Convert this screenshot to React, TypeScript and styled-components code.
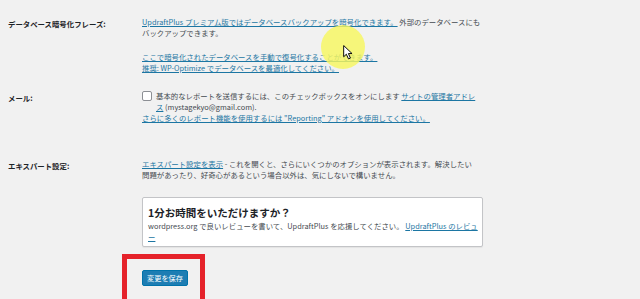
import styled, { createGlobalStyle } from "styled-components";

const GlobalStyle = createGlobalStyle`
  html, body {
    margin: 0;
    padding: 0;
    background: #f1f1f1;
    font-family: "Noto Sans CJK JP", "Noto Sans", sans-serif;
  }
`;

export default function App() {
  return (
    <>
      <GlobalStyle />
      <Page>
        <Row>
          <Label>データベース暗号化フレーズ:</Label>
          <Content>
            <Para>
              <Line>
                <Link>UpdraftPlus プレミアム版ではデータベースバックアップを暗号化できます。</Link> 外部のデータベースにも
              </Line>
              <Line>バックアップできます。</Line>
            </Para>
            <Para $gap={13}>
              <Line>
                <Link>ここで暗号化されたデータベースを手動で復号化することができます。</Link>
              </Line>
              <Line>
                <Link>推奨: WP-Optimize でデータベースを最適化してください。</Link>
              </Line>
            </Para>
          </Content>
        </Row>

        <Row $gap={17}>
          <Label>メール:</Label>
          <Content>
            <CheckRow>
              <Checkbox />
              <div>
                <Line>
                  基本的なレポートを送信するには、このチェックボックスをオンにします <Link>サイトの管理者アドレ</Link>
                </Line>
                <Line>
                  <Link>ス</Link> (mystagekyo@gmail.com).
                </Line>
              </div>
            </CheckRow>
            <Line>
              <Link>さらに多くのレポート機能を使用するには "Reporting" アドオンを使用してください。</Link>
            </Line>
          </Content>
        </Row>

        <Row $gap={35}>
          <Label>エキスパート設定:</Label>
          <Content>
            <Line>
              <Link>エキスパート設定を表示</Link> - これを開くと、さらにいくつかのオプションが表示されます。解決したい
            </Line>
            <Line>問題があったり、好奇心があるという場合以外は、気にしないで構いません。</Line>
          </Content>
        </Row>

        <Indent>
          <Notice>
            <NoticeTitle>1分お時間をいただけますか？</NoticeTitle>
            <Line>
              wordpress.org で良いレビューを書いて、UpdraftPlus を応援してください。 <Link>UpdraftPlus のレビュ</Link>
            </Line>
            <Line>
              <Link>ー</Link>
            </Line>
          </Notice>

          <SaveArea>
            <SaveButton>変更を保存</SaveButton>
            <RedFrame />
          </SaveArea>
        </Indent>

        <Highlight />
        <Cursor width="11" height="15" viewBox="0 0 10 14">
          <path d="M0.5 0.5 L0.5 11 L3 8.6 L5 13 L6.8 12.2 L4.9 8 L8.3 8 Z" fill="#fff" stroke="#000" strokeWidth="0.9" strokeLinejoin="round" />
        </Cursor>
      </Page>
    </>
  );
}

const Page = styled.div`
  position: relative;
  height: 299px;
  overflow: hidden;
  padding: 15.5px 0 0 8px;
  box-sizing: border-box;
  font-size: 7.4px;
  line-height: 11px;
  color: #444a50;
`;

const Row = styled.div<{ $gap?: number }>`
  display: flex;
  margin-top: ${(p) => p.$gap ?? 0}px;
`;

const Label = styled.div`
  width: 134px;
  flex: none;
  padding-top: 2px;
  font-weight: 600;
  color: #1d2327;
`;

const Content = styled.div`
  width: 341px;
`;

const Para = styled.div<{ $gap?: number }>`
  margin-top: ${(p) => p.$gap ?? 0}px;
`;

const Line = styled.div`
  white-space: nowrap;
`;

const Link = styled.span`
  color: #1c76a3;
  text-decoration: underline;
  text-underline-offset: 1px;
`;

const CheckRow = styled.div`
  display: flex;
  gap: 4px;
`;

const Checkbox = styled.span`
  flex: none;
  width: 8px;
  height: 8px;
  margin-top: 1.5px;
  border: 1px solid #8c8f94;
  border-radius: 2px;
  background: #fff;
`;

const Indent = styled.div`
  margin-left: 134px;
  width: 341px;
`;

const Notice = styled.div`
  margin-top: 17.5px;
  height: 50px;
  box-sizing: border-box;
  padding: 7px 5px 0;
  background: #fff;
  border: 1px solid #c3c4c7;
  border-radius: 2px;
  box-shadow: 0 1px 1px rgba(0, 0, 0, 0.06);
`;

const NoticeTitle = styled.div`
  font-size: 10.5px;
  line-height: 16px;
  font-weight: 700;
  color: #1d2327;
  margin-bottom: -1px;
`;

const SaveArea = styled.div`
  position: relative;
  margin-top: 23px;
`;

const SaveButton = styled.button`
  display: block;
  width: 46px;
  height: 16px;
  padding: 0;
  border: 1px solid #0073aa;
  border-radius: 2px;
  background: #1d7db3;
  color: #fff;
  font-family: inherit;
  font-size: 7.2px;
  line-height: 14px;
`;

const RedFrame = styled.div`
  position: absolute;
  left: -20px;
  top: -16px;
  width: 83px;
  height: 60px;
  box-sizing: border-box;
  border: 5px solid #e5222a;
`;

const Highlight = styled.div`
  position: absolute;
  left: 321px;
  top: 25px;
  width: 44px;
  height: 44px;
  border-radius: 50%;
  background: rgba(246, 246, 95, 0.82);
`;

const Cursor = styled.svg`
  position: absolute;
  left: 343px;
  top: 45px;
`;
